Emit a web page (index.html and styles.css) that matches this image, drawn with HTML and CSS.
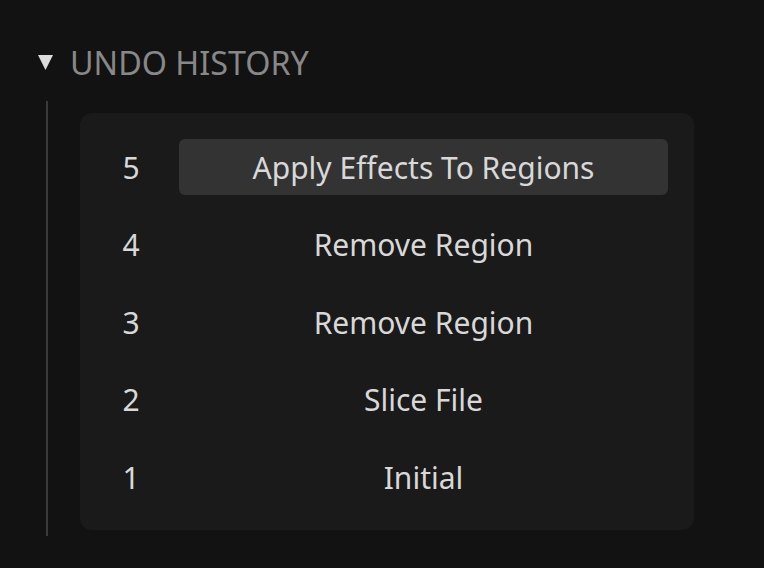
FILE: index.html
```html
<!DOCTYPE html>
<html lang="en">
<head>
    <meta charset="UTF-8">
    <title>Undo History</title>
    <link rel="stylesheet" href="styles.css">
</head>
<body>
    <!-- 撤销历史面板 -->
    <section class="history">
        <div class="history-header">
            <svg class="caret" width="15" height="15" viewBox="0 0 15 15">
                <polygon points="0,0 15,0 7.5,15" fill="#dcdcdc"/>
            </svg>
            <span class="history-title">UNDO HISTORY</span>
        </div>

        <div class="history-body">
            <ul class="history-list">
                <li class="history-item active">
                    <span class="step">5</span>
                    <span class="label">Apply Effects To Regions</span>
                </li>
                <li class="history-item">
                    <span class="step">4</span>
                    <span class="label">Remove Region</span>
                </li>
                <li class="history-item">
                    <span class="step">3</span>
                    <span class="label">Remove Region</span>
                </li>
                <li class="history-item">
                    <span class="step">2</span>
                    <span class="label">Slice File</span>
                </li>
                <li class="history-item">
                    <span class="step">1</span>
                    <span class="label">Initial</span>
                </li>
            </ul>
        </div>
    </section>
</body>
</html>
```

FILE: styles.css
```css
/* 基础样式 */
* {
    box-sizing: border-box;
    margin: 0;
    padding: 0;
}

body {
    background: #121212;
    font-family: "Noto Sans", "Open Sans", sans-serif;
    color: #d8d8d8;
    padding: 38px 0 0 38px;
}

/* 标题 */
.history-header {
    display: flex;
    align-items: center;
    gap: 17px;
    height: 48px;
}

.caret {
    display: block;
}

.history-title {
    font-size: 32.3px;
    color: #888888;
}

/* 列表区域 */
.history-body {
    margin-top: 15px;
    margin-left: 8px;
    border-left: 2px solid #3a3a3a;
    padding: 12px 0 6px 32px;
    width: 648px;
}

.history-list {
    list-style: none;
    background: #1a1a1a;
    border-radius: 12px;
    padding: 26px 26px 25px 26px;
    display: flex;
    flex-direction: column;
    gap: 21.5px;
}

.history-item {
    display: grid;
    grid-template-columns: 50px 1fr;
    column-gap: 23px;
    height: 56px;
    align-items: center;
    font-size: 30px;
}

.step {
    text-align: center;
}

.label {
    height: 56px;
    display: flex;
    align-items: center;
    justify-content: center;
    border-radius: 6px;
}

.history-item.active .label {
    background: #333333;
}
```
